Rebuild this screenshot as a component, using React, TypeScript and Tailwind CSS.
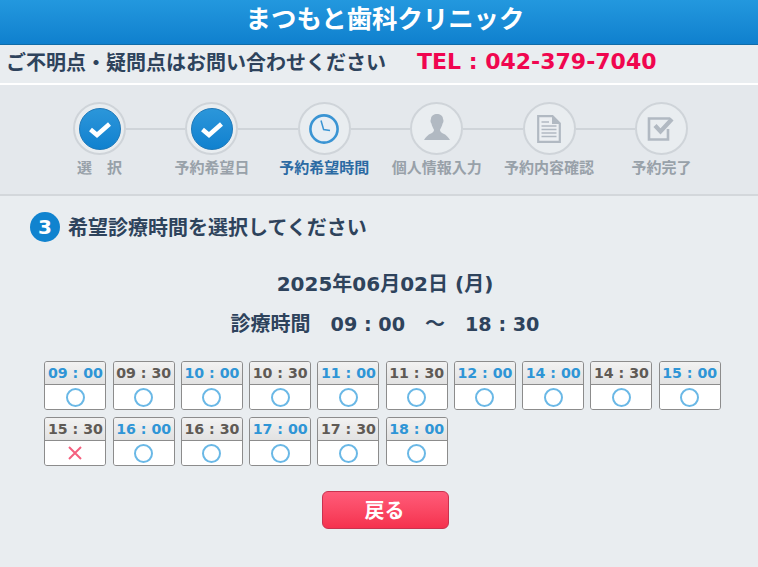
import React from "react";

const jp = "font-['DejaVu_Sans','Noto_Sans_CJK_JP',sans-serif]";
const cjk = "font-['Noto_Sans_CJK_JP',sans-serif]";

const Check = () => (
  <span className="flex h-[42px] w-[42px] items-center justify-center rounded-full border border-[#1c77b8] bg-gradient-to-b from-[#2b96da] to-[#0f81cf]">
    <svg width="26" height="22" viewBox="0 0 26 22">
      <path d="M3.5 11.5 L10 17 L22.5 6" fill="none" stroke="#fff" strokeWidth="4.5" />
    </svg>
  </span>
);

const Clock = () => (
  <svg width="32" height="32" viewBox="0 0 32 32">
    <circle cx="16" cy="16" r="13.6" fill="#e8eef4" stroke="#3a94d3" strokeWidth="2.6" />
    <path d="M13 7.5 L15.6 16.5 L22 17.5" fill="none" stroke="#3a94d3" strokeWidth="1.5" />
  </svg>
);

const Person = () => (
  <svg width="28" height="32" viewBox="0 0 28 32">
    <path
      d="M8 6 C8 2.5 11 1 14 1 C17 1 20 2.5 20 6 C20.8 7 20.6 9.5 19.6 10.5 C19 13.5 17.5 15.6 17 16.8 C17 18.5 18 19.5 20 20.4 C23 21.6 25.4 24 27 27 L1 27 C2.6 24 5 21.6 8 20.4 C10 19.5 11 18.5 11 16.8 C10.5 15.6 9 13.5 8.4 10.5 C7.4 9.5 7.2 7 8 6 Z"
      fill="#b1b9c2"
    />
  </svg>
);

const Doc = () => (
  <svg width="24" height="28" viewBox="0 0 24 28">
    <path d="M1.2 1.2 H15.5 L22.8 8.5 V26.8 H1.2 Z" fill="#eceff2" stroke="#b1b9c2" strokeWidth="2.2" />
    <path d="M15 1.2 V9 H22.8 Z" fill="#b1b9c2" />
    <path d="M4.5 7 H12 M4.5 11 H19.5 M4.5 14.5 H19.5 M4.5 18 H19.5 M4.5 21.5 H19.5" stroke="#b1b9c2" strokeWidth="1.3" />
  </svg>
);

const Done = () => (
  <svg width="28" height="26" viewBox="0 0 28 26">
    <path d="M21 13 V23.5 H2 V2.5 H23" fill="none" stroke="#b1b9c2" strokeWidth="2.6" />
    <path d="M8 9.5 L13.5 15.5 L25 3" fill="none" stroke="#b1b9c2" strokeWidth="4.2" />
  </svg>
);

const steps: { label: string; cls: string }[] = [
  { label: "選　択", cls: "text-[#98a1a9]" },
  { label: "予約希望日", cls: "text-[#98a1a9]" },
  { label: "予約希望時間", cls: "text-[#2b6aa3]" },
  { label: "個人情報入力", cls: "text-[#98a1a9]" },
  { label: "予約内容確認", cls: "text-[#98a1a9]" },
  { label: "予約完了", cls: "text-[#98a1a9]" },
];

const icons = [<Check />, <Check />, <Clock />, <Person />, <Doc />, <Done />];

const slots: { t: string; s: "blue" | "gray" | "x" }[] = [
  { t: "09 : 00", s: "blue" },
  { t: "09 : 30", s: "gray" },
  { t: "10 : 00", s: "blue" },
  { t: "10 : 30", s: "gray" },
  { t: "11 : 00", s: "blue" },
  { t: "11 : 30", s: "gray" },
  { t: "12 : 00", s: "blue" },
  { t: "14 : 00", s: "blue" },
  { t: "14 : 30", s: "gray" },
  { t: "15 : 00", s: "blue" },
  { t: "15 : 30", s: "x" },
  { t: "16 : 00", s: "blue" },
  { t: "16 : 30", s: "gray" },
  { t: "17 : 00", s: "blue" },
  { t: "17 : 30", s: "gray" },
  { t: "18 : 00", s: "blue" },
];

function Slot({ t, s }: { t: string; s: "blue" | "gray" | "x" }) {
  return (
    <div className="flex h-[49px] flex-col overflow-hidden rounded-[3px] border border-[#8c8c8c]">
      <div
        className={`flex h-[23px] items-center justify-center border-b border-[#8c8c8c] bg-gradient-to-b from-[#f2f2f2] to-[#e2e2e2] text-[14.2px] leading-none font-bold whitespace-nowrap ${
          s === "blue" ? "text-[#2f95d6]" : "text-[#5f5a55]"
        }`}
      >
        {t}
      </div>
      <div className="flex flex-1 items-center justify-center bg-white">
        {s === "x" ? (
          <svg width="16" height="16" viewBox="0 0 16 16">
            <path d="M2 2 L14 14 M14 2 L2 14" stroke="#f4607f" strokeWidth="2" />
          </svg>
        ) : (
          <span className="h-[19px] w-[19px] rounded-full border-2 border-[#6ab8e6]" />
        )}
      </div>
    </div>
  );
}

export default function App() {
  return (
    <div className={`flex h-[567px] w-[758px] flex-col overflow-hidden bg-[#e9edf0] text-[#2e435c] ${jp}`}>
      <header className="flex h-[45px] items-start justify-center border-b border-[#106ca8] bg-gradient-to-b from-[#2398de] to-[#0f80ce] pl-[12px]">
        <h1 className={`text-[25.4px] leading-[34px] font-bold text-white ${cjk}`}>まつもと歯科クリニック</h1>
      </header>

      <div className="flex h-[38px] items-center pl-[6px] font-bold whitespace-nowrap">
        <span className={`-mt-[5px] w-[411px] text-[20px] ${cjk}`}>ご不明点・疑問点はお問い合わせください</span>
        <span className="-mt-[5px] text-[22px] text-[#f0064f]">TEL : 042-379-7040</span>
      </div>

      <nav className="flex h-[113px] flex-col border-y-2 border-t-white border-b-[#d3d7db] bg-[#e4e8ec] pt-[17px] pl-[3px]">
        <div className="flex items-center justify-center">
          {icons.map((icon, i) => (
            <React.Fragment key={i}>
              {i > 0 && <span className="h-[2px] w-[59.4px] bg-[#cfd4d9]" />}
              <span className="flex h-[53px] w-[53px] shrink-0 items-center justify-center rounded-full border-2 border-[#cfd4d9] bg-[#e9edf0]">
                {icon}
              </span>
            </React.Fragment>
          ))}
        </div>
        <div className={`mt-[1px] grid grid-cols-[repeat(6,112.4px)] justify-center ${cjk}`}>
          {steps.map((st) => (
            <span key={st.label} className={`text-center text-[15px] leading-[22px] font-bold ${st.cls}`}>
              {st.label}
            </span>
          ))}
        </div>
      </nav>

      <main className="flex flex-1 flex-col">
        <div className="mt-[16px] flex items-center pl-[30px]">
          <span className="flex h-[30px] w-[30px] items-center justify-center rounded-full bg-[#1083cf] text-[20px] leading-none font-bold text-white">
            3
          </span>
          <h2 className={`ml-[8px] text-[20px] leading-[30px] font-bold ${cjk}`}>希望診療時間を選択してください</h2>
        </div>

        <p className="mt-[27px] pl-[12px] text-center text-[20px] leading-[30px] font-bold">2025年06月02日 (月)</p>
        <p className="mt-[10px] pl-[12px] text-center text-[20px] leading-[30px] font-bold whitespace-pre">
          診療時間　<span className="text-[19.2px]">09 : 00</span>　～　<span className="text-[19.2px]">18 : 30</span>
        </p>

        <div className="mt-[21px] ml-[44.4px] grid w-[676.3px] grid-cols-10 gap-x-[6.2px] gap-y-[7px]">
          {slots.map((x) => (
            <Slot key={x.t} t={x.t} s={x.s} />
          ))}
        </div>

        <button className={`mt-[25px] ml-[322px] flex h-[38px] w-[127px] items-center justify-center rounded-[6px] border border-[#c9324f] bg-gradient-to-b from-[#ff5b79] to-[#f5304e] pr-[2px] text-[20px] leading-none font-bold text-white ${cjk}`}>
          戻る
        </button>
      </main>
    </div>
  );
}
